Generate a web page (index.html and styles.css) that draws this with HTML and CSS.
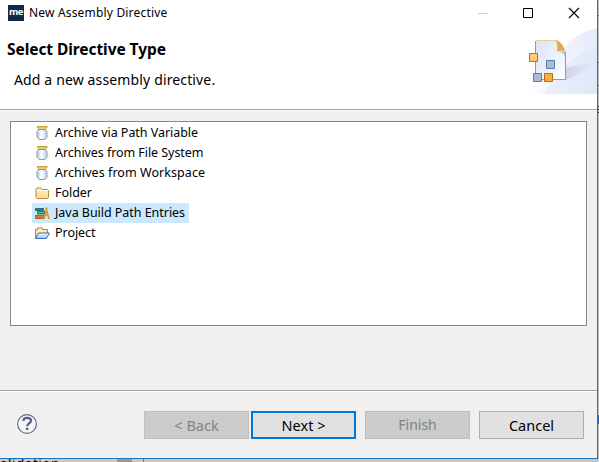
FILE: index.html
```html
<!DOCTYPE html>
<html lang="en">
<head>
<meta charset="utf-8">
<title>New Assembly Directive</title>
<link rel="stylesheet" href="styles.css">
</head>
<body>
<svg width="0" height="0" class="defs" aria-hidden="true">
  <defs>
    <linearGradient id="glass"><stop offset="0" stop-color="#b5c7df"/><stop offset=".45" stop-color="#fff"/><stop offset="1" stop-color="#b9cce4"/></linearGradient>
    <linearGradient id="fold" x2="0" y2="1"><stop offset="0" stop-color="#fff3cf"/><stop offset="1" stop-color="#fbd88c"/></linearGradient>
    <linearGradient id="open" x2="0" y2="1"><stop offset="0" stop-color="#eef6ff"/><stop offset="1" stop-color="#9fc6f3"/></linearGradient>
    <symbol id="jar" viewBox="0 0 16 16">
      <path d="M4.500 4.500h7l1.500 2v5.500l-2 2.500H5L3 12V6.500z" fill="url(#glass)" stroke="#8b9cba"/>
      <path d="M4 4.500h8" stroke="#b8893c"/>
      <path d="M3.500 1.500h9.500v1.500H3.500z" fill="#fff0b8" stroke="#c99e25"/>
    </symbol>
    <symbol id="folder" viewBox="0 0 16 16">
      <path d="M2 4.500l1-1.500h4l1 1.500h5.500l1 1v6.500l-1 1.500H3L2 12z" fill="url(#fold)" stroke="#bf8640"/>
      <path d="M3 5.500h10" stroke="#fffbe8"/>
    </symbol>
  </defs>
</svg>
<main class="window">
  <header class="titlebar">
    <span class="app">me</span>
    <span class="title">New Assembly Directive</span>
    <svg class="controls" width="124" height="24" viewBox="0 0 124 24" fill="none" stroke="#000">
      <path d="M5 12.500h10" stroke="#ccc"/><path d="M50.500 7.500h9v9h-9z"/><path d="M96 7l10 10M106 7l-10 10" stroke-width="1.100"/>
    </svg>
  </header>
  <section class="banner">
    <div><h1>Select Directive Type</h1><p>Add a new assembly directive.</p></div>
    <svg class="art" width="75" height="70" viewBox="0 0 75 70">
      <defs>
        <linearGradient id="sky"><stop offset="0" stop-color="#fff"/><stop offset="1" stop-color="#dce5f8"/></linearGradient>
        <linearGradient id="page" x2="1" y2="1"><stop offset="0" stop-color="#dbe4f3"/><stop offset="1" stop-color="#fbfdff"/></linearGradient>
        <linearGradient id="or" x2="0" y2="1"><stop offset="0" stop-color="#ffd080"/><stop offset="1" stop-color="#ffa62d"/></linearGradient>
        <linearGradient id="shade"><stop offset="0" stop-color="#bcaec9" stop-opacity=".5"/><stop offset="1" stop-color="#dce3f5" stop-opacity="0"/></linearGradient>
      </defs>
      <path d="M75 3C57 7 45 16 38 29C31 46 17 60 0 69h75z" fill="url(#sky)" opacity=".75"/>
      <path d="M75 24C58 27 48 34 37 48L20 69h55z" fill="#d5e0f7" opacity=".35"/>
      <path d="M43 43L75 36C66 44 56 50 44 55z" fill="url(#shade)"/>
      <path d="M14 16h20l9 11v27H14z" fill="url(#page)"/>
      <path d="M14 15.500h21" stroke="#e4d19e"/><path d="M13.500 16v38.500h30V27" fill="none" stroke="#8b9ead"/>
      <path d="M34 15c4 1 8 6 9 11l-3-1-5 2c1-4 0-8-1-12z" fill="#e7a84c"/>
      <path d="M37 27l4-2 2 1v6c-1-3-3-5-6-5z" fill="#9a9ba5" opacity=".5"/>
      <g stroke="#b96d24" fill="url(#or)"><path d="M7.500 28.500h8v8h-8zM22.500 48.500h8v8h-8z"/></g>
      <g stroke="#587bae" fill="#a9bad6"><path d="M24.500 35.500h8v8h-8zM11.500 48.500h8v8h-8z"/></g>
    </svg>
  </section>
  <section class="content">
    <ul class="list">
      <li><svg><use href="#jar"/></svg><span class="a">Archive via Path Variable</span></li>
      <li><svg><use href="#jar"/></svg><span class="b">Archives from File System</span></li>
      <li><svg><use href="#jar"/></svg><span class="c">Archives from Workspace</span></li>
      <li><svg><use href="#folder"/></svg><span class="d">Folder</span></li>
      <li class="selected"><svg viewBox="0 0 16 16">
        <path d="M1 3h9v3H1z" fill="#2c7481"/><path d="M3 6h8v3.500H3z" fill="#23845c"/><path d="M1 10h10v4H1z" fill="#b75e34"/><path d="M4 7.500h6" stroke="#68bd82"/><path d="M2 12h8" stroke="#e69a5b"/>
        <path d="M10 14L13 2.500M12 3l3 11M11 10h3" stroke="#dc951b" stroke-width="1.500" fill="none"/></svg><span class="e">Java Build Path Entries</span></li>
      <li><svg viewBox="0 0 16 16"><path d="M1.500 13V4.500h2V3h5v1.500h5V8" fill="url(#fold)" stroke="#b58337"/><path d="M1.500 13.500l3-5.500h11l-3 5.500z" fill="url(#open)" stroke="#3f6fac"/></svg><span class="f">Project</span></li>
    </ul>
  </section>
  <footer class="footer">
    <svg class="help" width="22" height="22" viewBox="0 0 22 22" fill="none"><circle cx="11" cy="11" r="9.400" fill="#f5f5f6" stroke="#60708e" stroke-width="1.200"/><path d="M7.300 7.800C7.500 5.500 9 4.800 11 4.800c2.400 0 4 1.100 4 3 0 2.500-3.800 2.700-3.800 5.400" stroke="#536386" stroke-width="2.300"/><path d="M11.100 14.700v2.300" stroke="#536386" stroke-width="2.500"/></svg>
    <button class="btn" disabled>&lt; Back</button>
    <button class="btn primary">Next &gt;</button>
    <button class="btn finish" disabled>Finish</button>
    <button class="btn">Cancel</button>
  </footer>
</main>
<aside class="edge"><i></i><i></i><i></i><i></i><i></i></aside>
<div class="behind"><span>alidation</span><i></i><b></b></div>
</body>
</html>
```

FILE: styles.css
```css
* { box-sizing: border-box; }
body { margin: 0; width: 599px; height: 462px; overflow: hidden; display: grid; grid-template-columns: 598px 1px; grid-template-rows: 459px 3px; background: #bfbfbf; font-family: "Noto Sans", "Open Sans", sans-serif; color: #000; }
.defs { position: absolute; }
.window { display: flex; flex-direction: column; background: #f0f0f0; border-right: 1px solid #1778c7; border-bottom: 1px solid #1778c7; }
.titlebar { height: 25px; background: #fff; display: flex; align-items: center; padding-left: 8px; }
.app { width: 16px; height: 16px; background: #102a49; color: #fff; font: bold 9.5px/14px "Noto Sans", sans-serif; text-align: center; letter-spacing: -.5px; }
.title { margin-left: 5px; font-size: 12px; line-height: 20px; letter-spacing: .18px; white-space: nowrap; }
.controls { margin-left: auto; }
.banner { height: 86px; background: #fff; display: flex; justify-content: space-between; border-bottom: 1px solid #fff; box-shadow: inset 0 -1px #a0a0a0; }
h1 { margin: 12px 0 0 7px; font-size: 15.5px; line-height: 24px; letter-spacing: -.07px; }
p { margin: 8px 0 0 14px; font-size: 14px; line-height: 22px; letter-spacing: .14px; }
.content { height: 279px; padding: 10px; }
.list { margin: 0; padding: 1px 21px; list-style: none; width: 577px; height: 205px; border: 1px solid #828790; background: #fff; font-size: 12.5px; letter-spacing: -.04px; }
.list li { width: max-content; height: 20px; display: flex; align-items: center; padding: 0 4px 0 2px; }
.list svg { width: 16px; height: 16px; margin-right: 5px; flex: none; }
.list span { line-height: 18px; }
.list .b { letter-spacing: -.06px; }
.list .c { letter-spacing: .06px; }
.list .selected { background: #cce8ff; }
.footer { flex: 1; display: flex; align-items: flex-start; padding: 20px 13px 0 16px; border-top: 1px solid #a0a0a0; box-shadow: inset 0 1px #fff; }
.help { margin: 2px 106px 0 0; flex: none; }
.btn { width: 105px; height: 28px; margin-right: 2px; padding: 0; font: 14.5px/22px "Noto Sans", sans-serif; background: #e1e1e1; color: #000; border: 1px solid #adadad; flex: none; }
.btn:disabled { background: #ccc; border-color: #bfbfbf; color: #838383; }
.primary { border: 2px solid #0078d7; margin-right: 9px; }
.finish { margin-right: 9px; font-size: 14px; }
.edge { display: flex; flex-direction: column; align-items: stretch; background: #c1c1c1; }
.edge i { height: 1px; background: #777; margin-top: 15px; }
.edge i:nth-child(2) { margin-top: 46px; }
.edge i:nth-child(3) { margin-top: 22px; }
.edge i:nth-child(4) { margin-top: 20px; height: 8px; background: repeating-linear-gradient(#111 0 1px, #bbb 1px 3px); }
.edge i:nth-child(5) { margin-top: 301px; height: 9px; background: #315ca6; }
.behind { grid-column: 1 / 3; display: flex; overflow: hidden; height: 3px; background: #c8c8c8; }
.behind span { width: 117px; font-size: 13.5px; line-height: 18px; margin-top: -4px; letter-spacing: .5px; }
.behind i { width: 15px; background: #999; margin-right: 11px; }
.behind b { width: 1px; background: #777; }
```
